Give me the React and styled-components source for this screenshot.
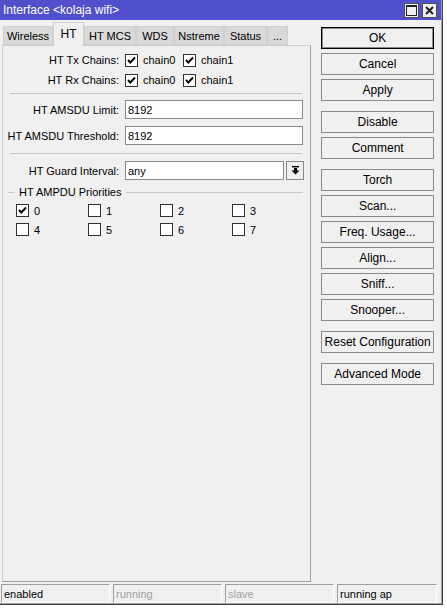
import React from 'react';
import styled, { createGlobalStyle } from 'styled-components';

const GlobalStyle = createGlobalStyle`
    html, body {
        margin: 0;
        background: #ffffff;
    }
    body {
        font-family: "Liberation Sans", Arial, sans-serif;
        font-size: 11px;
        color: #000;
    }
    * {
        box-sizing: border-box;
    }
`;

const Window = styled.div`
    width: 443px;
    height: 605px;
    background: #f0f0f0;
    border-right: 1px solid #404040;
    border-bottom: 1px solid #404040;
    box-shadow: inset -1px -1px 0 #a0a0a0;
    display: flex;
    flex-direction: column;
`;

const TitleBar = styled.div`
    height: 20px;
    margin-right: 1px;
    background: #5050cd;
    color: #ffffff;
    display: flex;
    align-items: center;
    justify-content: space-between;
    padding: 0 4px 0 3px;
    font-size: 12px;
`;

const TitleButtons = styled.div`
    display: flex;
    gap: 3px;
`;

const TitleButton = styled.div`
    width: 15px;
    height: 15px;
    background: #f0f0f0;
    border: 1px solid #505050;
    display: flex;
    align-items: center;
    justify-content: center;
`;

const Body = styled.div`
    flex: 1;
    display: flex;
    gap: 10px;
    padding: 0 8px 0 2px;
`;

const LeftColumn = styled.div`
    width: 310px;
    display: flex;
    flex-direction: column;
`;

const TabStrip = styled.div`
    height: 25px;
    display: flex;
    align-items: flex-end;
    padding-left: 1px;
`;

const Tab = styled.div`
    position: relative;
    width: ${(p) => p.$width}px;
    height: ${(p) => (p.$active ? 24 : 19)}px;
    margin-bottom: ${(p) => (p.$active ? -1 : 0)}px;
    z-index: ${(p) => (p.$active ? 1 : 0)};
    background: ${(p) => (p.$active ? '#f0f0f0' : '#d9d9d9')};
    border: 1px solid #d0d0d0;
    border-bottom: ${(p) => (p.$active ? 'none' : '1px solid #d0d0d0')};
    font-size: ${(p) => (p.$active ? 12 : 11)}px;
    display: flex;
    align-items: center;
    justify-content: center;
    padding-bottom: ${(p) => (p.$active ? 2 : 0)}px;
`;

const Panel = styled.div`
    flex: 1;
    border: 1px solid #d0d0d0;
    border-right-color: #a0a0a0;
    border-bottom-color: #a0a0a0;
    padding-top: 4px;
`;

const FieldRow = styled.div`
    display: flex;
    align-items: center;
    height: ${(p) => p.$height}px;
    margin-top: ${(p) => p.$top || 0}px;
`;

const Label = styled.div`
    width: 116px;
    padding-right: 0;
    text-align: right;
    white-space: nowrap;
    margin-right: 6px;
`;

const Separator = styled.div`
    height: 1px;
    background: #c8c8c8;
    margin: ${(p) => p.$top}px 8px ${(p) => p.$bottom}px 7px;
`;

const TextInput = styled.div`
    width: ${(p) => p.$width}px;
    height: 19px;
    background: #ffffff;
    border: 1px solid #8a8a8a;
    padding-left: 2px;
    display: flex;
    align-items: center;
`;

const DropButton = styled.div`
    width: 18px;
    height: 19px;
    margin-left: 2px;
    background: #f0f0f0;
    border: 1px solid #8a8a8a;
    display: flex;
    align-items: center;
    justify-content: center;
`;

const CheckItem = styled.div`
    display: flex;
    align-items: center;
    gap: 5px;
    width: ${(p) => p.$width}px;
`;

const Box = styled.div`
    width: 13px;
    height: 13px;
    background: #ffffff;
    border: 1px solid #333333;
    display: flex;
    align-items: center;
    justify-content: center;
`;

const GroupHeader = styled.div`
    display: flex;
    align-items: center;
    height: 14px;
    margin: 5px 7px 0 5px;
    gap: 5px;
`;

const GroupLine = styled.div`
    height: 1px;
    background: #c8c8c8;
    width: ${(p) => (p.$grow ? 'auto' : '6px')};
    flex: ${(p) => (p.$grow ? 1 : 'none')};
`;

const PriorityGrid = styled.div`
    display: grid;
    grid-template-columns: repeat(4, 72px);
    grid-auto-rows: 19px;
    align-items: center;
    margin-top: 2px;
    padding-left: 13px;
`;

const ButtonColumn = styled.div`
    width: 113px;
    display: flex;
    flex-direction: column;
    padding-top: 7px;
`;

const Button = styled.div`
    height: 22px;
    margin-top: ${(p) => (p.$gap ? 10 : 4)}px;
    background: #f0f0f0;
    border: 1px solid ${(p) => (p.$default ? '#000000' : '#8a8a8a')};
    box-shadow: ${(p) => (p.$default ? 'inset 0 0 0 1px #8a8a8a' : 'none')};
    display: flex;
    align-items: center;
    justify-content: center;
    font-size: 12px;
    &:first-child {
        margin-top: 0;
    }
`;

const StatusBar = styled.div`
    height: 22px;
    display: grid;
    grid-template-columns: 109px 109px 109px 100px;
    gap: 3px;
    padding: 2px 0 1px 1px;
`;

const StatusCell = styled.div`
    border-top: 1px solid #a0a0a0;
    border-left: 1px solid #a0a0a0;
    border-bottom: 1px solid #ffffff;
    border-right: 1px solid #ffffff;
    padding-left: 2px;
    display: flex;
    align-items: center;
    color: ${(p) => (p.$dim ? '#a0a0a0' : '#000000')};
`;

function CheckMark() {
    return (
        <svg width="9" height="9" viewBox="0 0 9 9">
            <path d="M1 4 L3.3 6.5 L8 1.5" fill="none" stroke="#000" strokeWidth="1.9" />
        </svg>
    );
}

function Checkbox({ checked, label, width }) {
    return (
        <CheckItem $width={width}>
            <Box>{checked && <CheckMark />}</Box>
            <span>{label}</span>
        </CheckItem>
    );
}

const tabs = [
    { name: 'Wireless', width: 50 },
    { name: 'HT', width: 31, active: true },
    { name: 'HT MCS', width: 52 },
    { name: 'WDS', width: 38 },
    { name: 'Nstreme', width: 50 },
    { name: 'Status', width: 43 },
    { name: '...', width: 21 },
];

const buttons = [
    { label: 'OK', default: true },
    { label: 'Cancel' },
    { label: 'Apply' },
    { label: 'Disable', gap: true },
    { label: 'Comment' },
    { label: 'Torch', gap: true },
    { label: 'Scan...' },
    { label: 'Freq. Usage...' },
    { label: 'Align...' },
    { label: 'Sniff...' },
    { label: 'Snooper...' },
    { label: 'Reset Configuration', gap: true },
    { label: 'Advanced Mode', gap: true },
];

function App() {
    return (
        <>
            <GlobalStyle />
            <Window>
                <TitleBar>
                    <span>Interface &lt;kolaja wifi&gt;</span>
                    <TitleButtons>
                        <TitleButton>
                            <svg width="11" height="11" viewBox="0 0 11 11">
                                <rect x="0.5" y="0.5" width="10" height="10" fill="none" stroke="#202020" />
                                <rect x="0" y="0" width="11" height="2" fill="#202020" />
                            </svg>
                        </TitleButton>
                        <TitleButton>
                            <svg width="9" height="9" viewBox="0 0 9 9">
                                <path d="M1 1 L8 8 M8 1 L1 8" stroke="#202020" strokeWidth="2" />
                            </svg>
                        </TitleButton>
                    </TitleButtons>
                </TitleBar>

                <Body>
                    <LeftColumn>
                        <TabStrip>
                            {tabs.map((t) => (
                                <Tab key={t.name} $width={t.width} $active={t.active}>
                                    {t.name}
                                </Tab>
                            ))}
                        </TabStrip>
                        <Panel>
                            <FieldRow $height={20}>
                                <Label>HT Tx Chains:</Label>
                                <Checkbox checked label="chain0" width={58} />
                                <Checkbox checked label="chain1" width={60} />
                            </FieldRow>
                            <FieldRow $height={20}>
                                <Label>HT Rx Chains:</Label>
                                <Checkbox checked label="chain0" width={58} />
                                <Checkbox checked label="chain1" width={60} />
                            </FieldRow>

                            <Separator $top={3} $bottom={6} />

                            <FieldRow $height={19}>
                                <Label>HT AMSDU Limit:</Label>
                                <TextInput $width={178}>8192</TextInput>
                            </FieldRow>
                            <FieldRow $height={19} $top={7}>
                                <Label>HT AMSDU Threshold:</Label>
                                <TextInput $width={178}>8192</TextInput>
                            </FieldRow>

                            <Separator $top={8} $bottom={7} />

                            <FieldRow $height={19}>
                                <Label>HT Guard Interval:</Label>
                                <TextInput $width={159}>any</TextInput>
                                <DropButton>
                                    <svg width="9" height="9" viewBox="0 0 9 9">
                                        <rect x="1" y="0" width="7" height="1.4" fill="#000" />
                                        <rect x="3" y="2" width="3" height="3" fill="#000" />
                                        <path d="M0.5 4.5 L8.5 4.5 L4.5 8.5 Z" fill="#000" />
                                    </svg>
                                </DropButton>
                            </FieldRow>

                            <GroupHeader>
                                <GroupLine />
                                <span>HT AMPDU Priorities</span>
                                <GroupLine $grow />
                            </GroupHeader>
                            <PriorityGrid>
                                {[0, 1, 2, 3, 4, 5, 6, 7].map((n) => (
                                    <Checkbox key={n} checked={n === 0} label={String(n)} width={72} />
                                ))}
                            </PriorityGrid>
                        </Panel>
                    </LeftColumn>

                    <ButtonColumn>
                        {buttons.map((b) => (
                            <Button key={b.label} $gap={b.gap} $default={b.default}>
                                {b.label}
                            </Button>
                        ))}
                    </ButtonColumn>
                </Body>

                <StatusBar>
                    <StatusCell>enabled</StatusCell>
                    <StatusCell $dim>running</StatusCell>
                    <StatusCell $dim>slave</StatusCell>
                    <StatusCell>running ap</StatusCell>
                </StatusBar>
            </Window>
        </>
    );
}

export default App;
